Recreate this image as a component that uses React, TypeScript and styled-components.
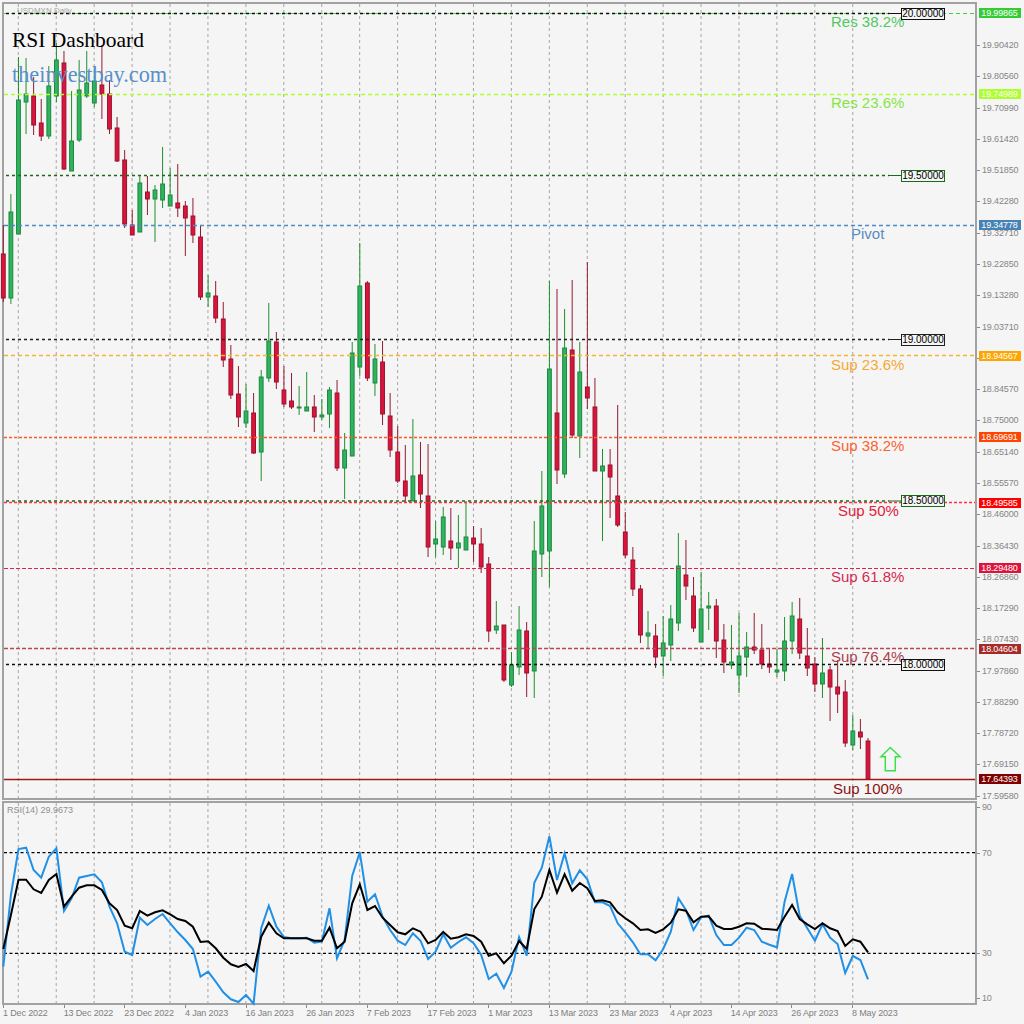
import React from "react";
import styled, { createGlobalStyle } from "styled-components";

// [high, bodyTop, bodyBottom, low, 1 = up candle] in screen pixels
const CANDLES: number[][] = [
  [225,254,298,302,0],[194,212,298,304,1],[57,100,234,234,1],[58,94,102,134,1],[77,96,125,135,0],
  [99,123,136,141,0],[66,86,136,139,1],[43,60,96,102,1],[51,63,169,170,0],[91,141,171,171,1],
  [60,90,140,142,1],[51,83,96,98,1],[67,81,103,107,1],[45,85,94,119,0],[80,94,129,134,0],
  [117,128,161,162,0],[150,160,224,228,0],[210,225,235,235,0],[176,183,232,232,1],[176,192,199,215,0],
  [185,190,199,242,1],[147,184,200,208,1],[168,195,206,206,1],[164,203,208,217,0],[201,206,218,256,0],
  [198,216,235,243,0],[226,237,297,300,0],[275,293,297,307,1],[281,296,318,323,0],[302,319,360,367,0],
  [345,359,395,399,0],[366,394,417,427,0],[384,411,423,428,1],[393,413,453,454,0],[370,377,452,481,1],
  [303,341,378,382,1],[332,342,382,389,0],[366,390,404,407,0],[373,401,407,409,0],[386,407,408,415,1],
  [372,407,411,411,1],[395,407,417,432,0],[399,415,417,420,1],[387,390,414,428,1],[380,393,468,471,0],
  [433,450,468,499,1],[342,353,456,456,1],[243,286,367,376,1],[281,283,378,381,0],[344,359,383,396,1],
  [341,362,414,425,0],[393,416,450,457,0],[426,452,481,483,0],[445,481,496,502,0],[419,476,501,501,1],
  [442,475,494,508,0],[444,496,547,557,0],[521,539,544,557,1],[507,517,547,555,1],[508,541,548,560,0],
  [515,543,548,568,1],[501,537,550,550,1],[526,538,544,562,0],[528,544,567,573,0],[557,564,631,642,0],
  [601,626,630,634,1],[625,625,680,682,0],[652,665,685,687,1],[606,630,667,675,1],[622,631,673,697,0],
  [521,551,671,698,1],[471,506,554,577,1],[281,369,551,587,1],[289,413,470,484,0],[309,348,474,478,1],
  [280,350,435,438,0],[342,372,436,458,1],[262,387,398,409,0],[378,407,471,471,0],[449,466,471,541,1],
  [449,465,477,518,0],[405,496,525,527,0],[512,532,555,558,0],[547,560,589,596,0],[585,589,635,643,0],
  [611,633,636,649,1],[624,636,657,668,0],[616,643,656,676,1],[605,619,645,661,1],[533,566,623,631,1],
  [540,575,586,600,0],[577,596,628,632,0],[572,609,642,642,1],[592,606,608,630,1],[599,606,641,658,0],
  [624,640,662,673,0],[625,662,665,669,1],[613,656,675,693,1],[632,647,657,677,1],[613,647,650,654,0],
  [624,650,664,669,0],[649,664,667,673,0],[649,670,672,677,1],[617,641,671,681,1],[602,616,641,654,1],
  [598,619,653,659,0],[628,656,668,676,0],[657,664,684,692,0],[638,673,684,698,1],[666,670,687,721,0],
  [660,687,694,713,0],[680,692,743,747,0],[715,731,745,750,1],[719,732,737,749,0],[738,741,779,779,0],
];

const RSI_FAST = [
  966.7,895,849,847.7,870,877.7,856.7,848.3,911,898.3,877.7,876,874.3,882.3,906.7,923.3,951.7,955,917.7,925,
  919,914,923.3,932.3,940,949,976.7,971.7,981.7,992.3,999.3,1002,995,1003.7,928.3,905.7,926.7,937,938.3,938.3,
  937.7,942.7,941.7,908.3,958.3,940,876,852.3,901.7,894.3,916.7,930,940.7,945,933.3,940.7,959,951.7,934.3,947.7,
  942,937.3,943.3,955,979,973.7,988,971.7,937,955.7,882.7,867.7,836.3,880,853.3,883.3,870.3,879.3,902.3,902.3,
  906,923.3,932.3,942.3,954.3,954.3,960.3,949,931.7,898.3,910,930,917.3,915.7,935,945,945,937.7,927.7,930,
  941.7,944.7,947.3,901.7,874,915.7,928.3,940.7,924.3,937.7,944,973,956,960,979.3,
];

const RSI_SLOW = [
  949,915,879.7,879.7,889.3,893,880,874,906.7,896.7,887.7,885.3,885.3,890,903.3,910,925.7,928.3,911,915.7,
  912.3,910.3,914.3,919,921,926.7,942,941.3,948.3,957.7,964.3,967,964,971,936.7,922.7,933.3,938.3,938.3,938.3,
  938.3,940.7,940.7,927.7,948.3,941.7,903.3,884.3,910,906,917.7,925,932.3,934.3,928.3,931.7,943.3,940,932,938.7,
  937.3,934.3,936,941.7,955.7,953.3,963.3,955.7,941,949,909,896.7,870,892.7,874.3,890.7,883,888.3,901,900.3,
  902.3,912.3,918.3,923.3,930,929.3,933,929.3,922.7,909.3,910.7,922.3,916.7,916.3,925.7,929,929,926.7,923.3,923.7,
  928.7,929.3,930,916.7,905,919,924.3,929,923.3,928.3,931,946,939.3,941.7,952.3,
];

const LEVELS = [
  { y: 13.5, color: "#40d040", dash: "4 3", width: 1.2 },
  { y: 94.5, color: "#adff2f", dash: "4 3", width: 1.3 },
  { y: 225.5, color: "#4a8cc8", dash: "4 3", width: 1.3 },
  { y: 355.5, color: "#f5b535", dash: "4 3", width: 1.4 },
  { y: 437.5, color: "#ff5a20", dash: "3 2", width: 1.5 },
  { y: 502.5, color: "#ff3040", dash: "3 2", width: 1.5 },
  { y: 568.5, color: "#e0204a", dash: "4 2", width: 1.2 },
  { y: 648.5, color: "#b84858", dash: "4 2", width: 1.4 },
  { y: 779.5, color: "#a01818", width: 1.3 },
];

const ROUND_LEVELS = [
  { y: 13.5, color: "#101010", value: "20.00000" },
  { y: 175.5, color: "#1a6a1a", value: "19.50000" },
  { y: 339.5, color: "#202020", value: "19.00000" },
  { y: 501, color: "#1a6a1a", value: "18.50000" },
  { y: 664.5, color: "#101010", value: "18.00000" },
];

const LEVEL_LABELS = [
  { x: 831, y: 22, color: "#4fc860", text: "Res 38.2%" },
  { x: 831, y: 103, color: "#85e545", text: "Res 23.6%" },
  { x: 851, y: 233.5, color: "#5b8cc0", text: "Pivot" },
  { x: 831, y: 365, color: "#f5a830", text: "Sup 23.6%" },
  { x: 831, y: 446, color: "#fa6230", text: "Sup 38.2%" },
  { x: 838, y: 511, color: "#e0203a", text: "Sup 50%" },
  { x: 831, y: 577, color: "#d42a50", text: "Sup 61.8%" },
  { x: 831, y: 657, color: "#a8404c", text: "Sup 76.4%" },
  { x: 833, y: 788.5, color: "#8b1010", text: "Sup 100%" },
];

const PRICE_TICKS = [
  "19.90420", "19.80560", "19.70990", "19.61420", "19.51850", "19.42280", "19.32710", "19.22850", "19.13280",
  "19.03710", "18.94140", "18.84570", "18.75000", "18.65140", "18.55570", "18.46000", "18.36430", "18.26860",
  "18.17290", "18.07430", "17.97860", "17.88290", "17.78720", "17.69150", "17.59580",
];

const PRICE_TAGS: [string, number, string][] = [
  ["19.99865", 13, "#32cd32"], ["19.74989", 94, "#adff2f"], ["19.34778", 225, "#4682b4"],
  ["18.94567", 355.5, "#ffa500"], ["18.69691", 437, "#ff4500"], ["18.49585", 502.5, "#ff0000"],
  ["18.29480", 568, "#dc143c"], ["18.04604", 648.5, "#a52a2a"], ["17.64393", 779, "#800000"],
];

const RSI_TICKS = ["90", "70", "30", "10"];

const DATES = [
  "1 Dec 2022", "13 Dec 2022", "23 Dec 2022", "4 Jan 2023", "16 Jan 2023", "26 Jan 2023", "7 Feb 2023", "17 Feb 2023",
  "1 Mar 2023", "13 Mar 2023", "23 Mar 2023", "4 Apr 2023", "14 Apr 2023", "26 Apr 2023", "8 May 2023",
];

const candleX = (i: number) => 3.3 + 7.585 * i;
const gridXs = Array.from({ length: 23 }, (_, k) => 18.3 + 37.93 * k);
const toPoints = (values: number[]) => values.map((y, i) => `${candleX(i).toFixed(1)},${y}`).join(" ");

const GlobalStyle = createGlobalStyle`
  html, body {
    margin: 0;
    padding: 0;
    background: #f5f5f5;
  }
`;

const Screen = styled.div`
  width: 1024px;
  height: 1024px;
  padding-top: 2px;
  box-sizing: border-box;
  display: flex;
  flex-direction: column;
  gap: 1px;
  background: #f5f5f5;
  overflow: hidden;
  font-family: "Liberation Sans", Arial, sans-serif;
`;

const PaneRow = styled.div<{ $height: number }>`
  height: ${({ $height }) => $height}px;
  padding-left: 2px;
  display: flex;
  flex: none;
`;

const Plot = styled.div`
  width: 975px;
  box-sizing: border-box;
  border: 2px solid #a2a2a2;
  position: relative;
  flex: none;
`;

const ChartSvg = styled.svg`
  position: absolute;
  top: 0;
  left: 0;
  display: block;
  overflow: visible;
`;

const PriceAxis = styled.div`
  flex: 1;
  position: relative;
`;

const PriceTicks = styled.div`
  height: 761px;
  padding-top: 38px;
  display: flex;
  flex-direction: column;
  justify-content: space-between;
`;

const RsiTicks = styled.div`
  padding-top: 1px;
  display: grid;
  grid-template-rows: 46px 100px 45px 10px;
`;

const AxisValue = styled.span`
  height: 10px;
  padding-left: 5px;
  position: relative;
  font-size: 9px;
  letter-spacing: -0.14px;
  line-height: 10px;
  color: #858585;
  white-space: nowrap;

  &::before {
    content: "";
    position: absolute;
    left: 0;
    top: 5px;
    width: 3px;
    height: 1px;
    background: #8a8a8a;
  }
`;

const PriceTag = styled.span.attrs<{ $y: number }>(({ $y }) => ({ style: { top: $y } }))<{ $color: string }>`
  position: absolute;
  left: 1.5px;
  width: 42px;
  height: 10px;
  transform: translateY(-50%);
  background: ${({ $color }) => $color};
  color: #ffffff;
  font-size: 9px;
  letter-spacing: -0.14px;
  line-height: 10px;
  text-align: center;
`;

const Watermark = styled.div`
  position: absolute;
  left: 8px;
  top: 2px;
  display: flex;
  flex-direction: column;
  gap: 9px;
`;

const Caption = styled.span`
  height: 12px;
  padding-left: 5px;
  color: #a6a6a6;
  font-size: 8px;
  line-height: 10px;
  white-space: nowrap;
`;

const RsiCaption = styled.span`
  position: absolute;
  left: 3px;
  top: 2px;
  color: #909090;
  font-size: 9px;
  line-height: 10px;
  white-space: nowrap;
`;

const Brand = styled.div<{ $size: number; $color: string }>`
  font-family: "Liberation Serif", "Times New Roman", serif;
  font-size: ${({ $size }) => $size}px;
  line-height: 26px;
  color: ${({ $color }) => $color};
  white-space: nowrap;
`;

const LevelLabel = styled.span.attrs<{ $x: number; $y: number }>(({ $x, $y }) => ({
  style: { left: $x, top: $y },
}))<{ $color: string }>`
  position: absolute;
  transform: translateY(-50%);
  font-size: 15px;
  line-height: 16px;
  color: ${({ $color }) => $color};
  white-space: nowrap;
`;

const RoundBox = styled.span.attrs<{ $y: number }>(({ $y }) => ({ style: { top: $y } }))<{ $color: string }>`
  position: absolute;
  left: 897px;
  width: 44px;
  height: 12px;
  box-sizing: border-box;
  transform: translateY(-50%);
  border: 1px solid ${({ $color }) => $color};
  background: #f5f5f5;
  color: #000000;
  font-size: 10px;
  line-height: 10px;
  text-align: center;
`;

const DateAxis = styled.div`
  margin-top: -1px;
  padding-left: 3px;
  display: grid;
  grid-template-columns: repeat(15, 60.65px);
  flex: none;
`;

const DateLabel = styled.span`
  height: 19px;
  padding-top: 2px;
  box-sizing: border-box;
  position: relative;
  font-size: 9px;
  letter-spacing: -0.14px;
  line-height: 12px;
  color: #808080;
  white-space: nowrap;

  &::before {
    content: "";
    position: absolute;
    left: 0;
    top: 0;
    width: 1px;
    height: 3px;
    background: #8a8a8a;
  }
`;

const GridLines: React.FC<{ top: number; bottom: number }> = ({ top, bottom }) => (
  <g stroke="#a6a6a6" strokeDasharray="3 3">
    {gridXs.map((x) => (
      <line key={x} x1={x} x2={x} y1={top} y2={bottom} />
    ))}
  </g>
);

const CandleChart: React.FC = () => (
  <ChartSvg width={971} height={794} viewBox="4 4 971 794">
    <GridLines top={4} bottom={798} />
    {CANDLES.map(([high, top, bottom, low, up], i) => {
      const x = candleX(i);
      return (
        <g key={i}>
          <line x1={x} x2={x} y1={high} y2={low} stroke={up ? "#1f8f2a" : "#8e1c30"} />
          <rect
            x={x - 1.9}
            y={top}
            width={3.8}
            height={bottom - top}
            fill={up ? "#2fb35c" : "#dc143c"}
            stroke={up ? "#1b8740" : "#9a0f2c"}
          />
        </g>
      );
    })}
    {LEVELS.map((l) => (
      <line
        key={l.y}
        x1={4}
        x2={975}
        y1={l.y}
        y2={l.y}
        stroke={l.color}
        strokeDasharray={l.dash}
        strokeWidth={l.width}
      />
    ))}
    {ROUND_LEVELS.map((l) => (
      <g key={l.y} stroke={l.color}>
        <line x1={6} x2={889} y1={l.y} y2={l.y} strokeDasharray="3 3" strokeWidth={1.3} />
        <line x1={889} x2={901} y1={l.y} y2={l.y} />
      </g>
    ))}
    {/* up arrow next to the last candle */}
    <polygon
      points="890.3,747.5 881,756.7 885.3,756.7 885.3,770.7 895.3,770.7 895.3,756.7 900,756.7"
      fill="none"
      stroke="#3ce04a"
      strokeWidth={1.5}
    />
  </ChartSvg>
);

const RsiChart: React.FC = () => (
  <ChartSvg width={971} height={200} viewBox="4 803 971 200">
    <GridLines top={803} bottom={1003} />
    <g stroke="#000000" strokeDasharray="3 2.5" strokeWidth={1.2}>
      <line x1={4} x2={975} y1={852.7} y2={852.7} />
      <line x1={4} x2={975} y1={953.3} y2={953.3} />
    </g>
    <polyline points={toPoints(RSI_FAST)} fill="none" stroke="#2090e6" strokeWidth={2} />
    <polyline points={toPoints(RSI_SLOW)} fill="none" stroke="#000000" strokeWidth={2} />
  </ChartSvg>
);

export default function App() {
  return (
    <Screen>
      <GlobalStyle />
      <PaneRow $height={798}>
        <Plot>
          <CandleChart />
          <Watermark>
            <Caption>USDMXN,Daily</Caption>
            <Brand $size={21.5} $color="#000000">RSI Dashboard</Brand>
            <Brand $size={22.3} $color="#5a90c8">theinvestbay.com</Brand>
          </Watermark>
          {LEVEL_LABELS.map((l) => (
            <LevelLabel key={l.text} $x={l.x - 4} $y={l.y - 4} $color={l.color}>
              {l.text}
            </LevelLabel>
          ))}
          {ROUND_LEVELS.map((l) => (
            <RoundBox key={l.value} $y={l.y - 4} $color={l.color}>
              {l.value}
            </RoundBox>
          ))}
        </Plot>
        <PriceAxis>
          <PriceTicks>
            {PRICE_TICKS.map((value) => (
              <AxisValue key={value}>{value}</AxisValue>
            ))}
          </PriceTicks>
          {PRICE_TAGS.map(([value, y, color]) => (
            <PriceTag key={value} $y={y - 2} $color={color}>{value}</PriceTag>
          ))}
        </PriceAxis>
      </PaneRow>
      <PaneRow $height={204}>
        <Plot>
          <RsiChart />
          <RsiCaption>RSI(14) 29.9673</RsiCaption>
        </Plot>
        <PriceAxis>
          <RsiTicks>
            {RSI_TICKS.map((value) => (
              <AxisValue key={value}>{value}</AxisValue>
            ))}
          </RsiTicks>
        </PriceAxis>
      </PaneRow>
      <DateAxis>
        {DATES.map((label) => (
          <DateLabel key={label}>{label}</DateLabel>
        ))}
      </DateAxis>
    </Screen>
  );
}
